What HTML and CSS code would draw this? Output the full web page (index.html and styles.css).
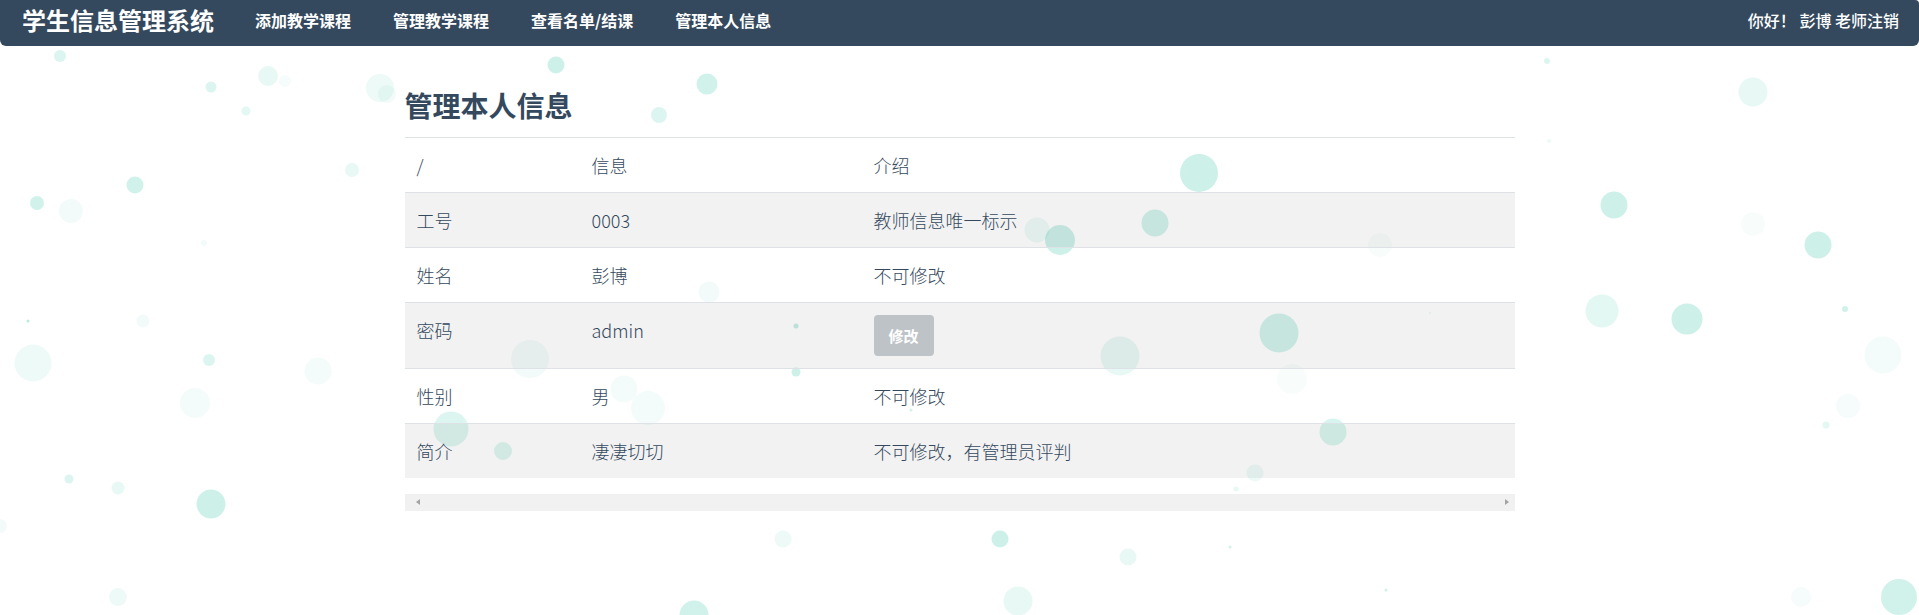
FILE: index.html
```html
<!DOCTYPE html>
<html lang="zh-CN">
<head>
<meta charset="utf-8">
<title>学生信息管理系统</title>
<link rel="stylesheet" href="styles.css">
</head>
<body>
<svg class="bubbles" width="1919" height="615" viewBox="0 0 1919 615" aria-hidden="true">
  <g fill="#1abc9c">
    <circle cx="60" cy="56" r="6" fill-opacity=".15"/>
    <circle cx="268" cy="76" r="10" fill-opacity=".1"/>
    <circle cx="211" cy="87" r="5.5" fill-opacity=".15"/>
    <circle cx="246" cy="111" r="4.5" fill-opacity=".12"/>
    <circle cx="380" cy="88" r="14" fill-opacity=".08"/>
    <circle cx="387" cy="94" r="9" fill-opacity=".06"/>
    <circle cx="285" cy="81" r="6" fill-opacity=".04"/>
    <circle cx="556" cy="65" r="8.5" fill-opacity=".22"/>
    <circle cx="707" cy="84" r="10.5" fill-opacity=".2"/>
    <circle cx="659" cy="115" r="8" fill-opacity=".15"/>
    <circle cx="352" cy="170" r="7" fill-opacity=".1"/>
    <circle cx="135" cy="185" r="8.5" fill-opacity=".2"/>
    <circle cx="37" cy="203" r="7" fill-opacity=".2"/>
    <circle cx="71" cy="211" r="12" fill-opacity=".06"/>
    <circle cx="204" cy="243" r="3" fill-opacity=".06"/>
    <circle cx="28" cy="321" r="1.5" fill-opacity=".3"/>
    <circle cx="143" cy="321" r="6.5" fill-opacity=".06"/>
    <circle cx="33" cy="363" r="18.5" fill-opacity=".08"/>
    <circle cx="209" cy="360" r="6" fill-opacity=".15"/>
    <circle cx="318" cy="371" r="13.5" fill-opacity=".05"/>
    <circle cx="195" cy="403" r="15" fill-opacity=".05"/>
    <circle cx="530" cy="359" r="19" fill-opacity=".06"/>
    <circle cx="624" cy="389" r="13.5" fill-opacity=".05"/>
    <circle cx="648" cy="408" r="17" fill-opacity=".05"/>
    <circle cx="451" cy="429" r="17.5" fill-opacity=".15"/>
    <circle cx="503" cy="451" r="9" fill-opacity=".15"/>
    <circle cx="709" cy="292" r="10.5" fill-opacity=".06"/>
    <circle cx="796" cy="326" r="2.5" fill-opacity=".25"/>
    <circle cx="796" cy="372" r="4.5" fill-opacity=".22"/>
    <circle cx="911" cy="410" r="1.5" fill-opacity=".2"/>
    <circle cx="69" cy="479" r="4.5" fill-opacity=".15"/>
    <circle cx="118" cy="488" r="6.5" fill-opacity=".1"/>
    <circle cx="211" cy="504" r="14.5" fill-opacity=".22"/>
    <circle cx="0" cy="526" r="7" fill-opacity=".06"/>
    <circle cx="118" cy="597" r="9" fill-opacity=".08"/>
    <circle cx="694" cy="615" r="14.5" fill-opacity=".2"/>
    <circle cx="1547" cy="61" r="3" fill-opacity=".15"/>
    <circle cx="1753" cy="92" r="14.5" fill-opacity=".1"/>
    <circle cx="1549" cy="141" r="2" fill-opacity=".08"/>
    <circle cx="1199" cy="173" r="19" fill-opacity=".22"/>
    <circle cx="1155" cy="223" r="13.5" fill-opacity=".2"/>
    <circle cx="1614" cy="205" r="13.5" fill-opacity=".22"/>
    <circle cx="1753" cy="224" r="12" fill-opacity=".03"/>
    <circle cx="1818" cy="245" r="13.5" fill-opacity=".22"/>
    <circle cx="1602" cy="311" r="16.5" fill-opacity=".12"/>
    <circle cx="1687" cy="319" r="15.5" fill-opacity=".22"/>
    <circle cx="1845" cy="309" r="3" fill-opacity=".2"/>
    <circle cx="1883" cy="355" r="18.5" fill-opacity=".05"/>
    <circle cx="1848" cy="406" r="12" fill-opacity=".04"/>
    <circle cx="1826" cy="425" r="3.5" fill-opacity=".12"/>
    <circle cx="1279" cy="333" r="19.5" fill-opacity=".2"/>
    <circle cx="1333" cy="432" r="13.5" fill-opacity=".17"/>
    <circle cx="1255" cy="473" r="8.5" fill-opacity=".08"/>
    <circle cx="1236" cy="489" r="2.5" fill-opacity=".1"/>
    <circle cx="1430" cy="313" r="1" fill-opacity=".1"/>
    <circle cx="1230" cy="547" r="1.5" fill-opacity=".2"/>
    <circle cx="1386" cy="590" r="1.5" fill-opacity=".2"/>
    <circle cx="1801" cy="597" r="10" fill-opacity=".04"/>
    <circle cx="1899" cy="597" r="18" fill-opacity=".2"/>
    <circle cx="1037" cy="230" r="12.5" fill-opacity=".08"/>
    <circle cx="1060" cy="240" r="15" fill-opacity=".22"/>
    <circle cx="1120" cy="356" r="19.5" fill-opacity=".1"/>
    <circle cx="1128" cy="557" r="8.5" fill-opacity=".1"/>
    <circle cx="1000" cy="539" r="8.5" fill-opacity=".22"/>
    <circle cx="1018" cy="601" r="14.5" fill-opacity=".1"/>
    <circle cx="783" cy="539" r="8.5" fill-opacity=".08"/>
    <circle cx="1380" cy="245" r="12" fill-opacity=".03"/>
    <circle cx="1292" cy="379" r="15" fill-opacity=".03"/>
  </g>
</svg>

<nav class="navbar">
  <a class="brand" href="#">学生信息管理系统</a>
  <ul class="nav">
    <li><a href="#">添加教学课程</a></li>
    <li><a href="#">管理教学课程</a></li>
    <li><a href="#">查看名单/结课</a></li>
    <li><a href="#">管理本人信息</a></li>
  </ul>
  <div class="user">你好！ 彭博 老师注销</div>
</nav>

<main class="container">
  <h3 class="title">管理本人信息</h3>
  <div class="table-wrap">
    <table class="info">
      <colgroup>
        <col class="c1"><col class="c2"><col class="c3">
      </colgroup>
      <thead>
        <tr><td>/</td><td>信息</td><td>介绍</td></tr>
      </thead>
      <tbody>
        <tr><td>工号</td><td>0003</td><td>教师信息唯一标示</td></tr>
        <tr><td>姓名</td><td>彭博</td><td>不可修改</td></tr>
        <tr><td>密码</td><td>admin</td><td><button class="btn" type="button">修改</button></td></tr>
        <tr><td>性别</td><td>男</td><td>不可修改</td></tr>
        <tr><td>简介</td><td>凄凄切切</td><td>不可修改，有管理员评判</td></tr>
      </tbody>
    </table>
    <div class="hscroll">
      <span class="arrow arrow-left"></span>
      <span class="arrow arrow-right"></span>
    </div>
  </div>
</main>
</body>
</html>
```
FILE: styles.css
```css
html, body {
  margin: 0;
  padding: 0;
}

body {
  position: relative;
  width: 1919px;
  height: 615px;
  overflow: hidden;
  background: #ffffff;
  color: #34495e;
  font-family: "Noto Sans CJK SC", "Liberation Sans", sans-serif;
}

.bubbles {
  position: absolute;
  left: 0;
  top: 0;
  z-index: 0;
}

/* ---------- navbar ---------- */
.navbar {
  position: relative;
  z-index: 2;
  height: 46px;
  box-sizing: border-box;
  display: flex;
  align-items: center;
  padding: 0 20px 7px 22px;
  background: #34495e;
  border-radius: 0 4px 6px 6px;
}

.brand {
  color: #ffffff;
  font-size: 24px;
  font-weight: 700;
  line-height: 30px;
  text-decoration: none;
  margin-right: 20px;
}

.nav {
  display: flex;
  list-style: none;
  margin: 0;
  padding: 0;
}

.nav a {
  display: block;
  padding: 0 21px;
  color: #ffffff;
  font-size: 16px;
  font-weight: 700;
  line-height: 24px;
  text-decoration: none;
}

.user {
  margin-left: auto;
  color: #ffffff;
  font-size: 16px;
  font-weight: 500;
  line-height: 24px;
}

/* ---------- content ---------- */
.container {
  position: relative;
  z-index: 1;
  width: 1110px;
  margin: 0 auto;
  padding-top: 42px;
}

.title {
  margin: 0 0 15px;
  font-size: 28px;
  line-height: 34px;
  font-weight: 700;
  color: #34495e;
}

.table-wrap {
  width: 1110px;
}

.info {
  width: 1110px;
  border-collapse: collapse;
  table-layout: fixed;
  font-size: 18px;
  font-weight: 300;
  line-height: 30px;
  color: #34495e;
}

.c1 { width: 175px; }
.c2 { width: 282px; }
.c3 { width: 653px; }

.info td {
  padding: 12px;
  vertical-align: top;
  border-top: 1px solid #dee2e6;
  text-align: left;
}

.info tbody tr:nth-child(odd) {
  background: rgba(0, 0, 0, 0.05);
}

.btn {
  display: flex;
  align-items: center;
  justify-content: center;
  width: 60px;
  height: 41px;
  padding: 0;
  border: 0;
  border-radius: 4px;
  background: #bdc3c7;
  color: #ffffff;
  font-family: inherit;
  font-size: 15px;
  font-weight: 700;
}

/* faux horizontal scrollbar */
.hscroll {
  position: relative;
  height: 17px;
  margin-top: 16px;
  background: #f1f1f1;
}

.arrow {
  position: absolute;
  top: 5px;
  width: 0;
  height: 0;
  border-top: 3.5px solid transparent;
  border-bottom: 3.5px solid transparent;
}

.arrow-left {
  left: 11px;
  border-right: 4px solid #a3a3a3;
}

.arrow-right {
  right: 6px;
  border-left: 4px solid #a3a3a3;
}
```
